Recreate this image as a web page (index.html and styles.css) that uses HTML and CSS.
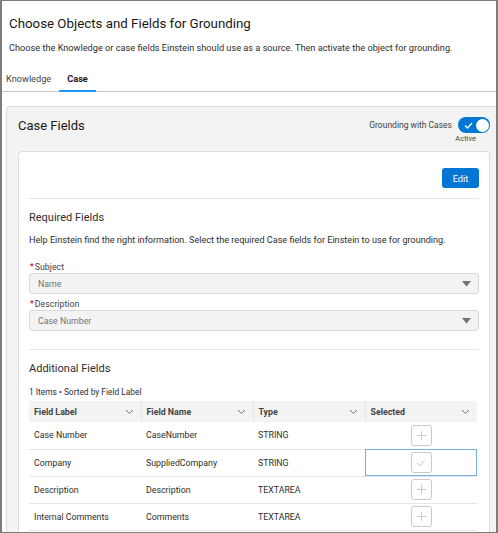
FILE: index.html
```html
<!DOCTYPE html>
<html>
<head>
<meta charset="utf-8">
<link rel="stylesheet" href="styles.css">
</head>
<body>
<div class="frame">
  <header class="page-head">
    <h1 class="title">Choose Objects and Fields for Grounding</h1>
    <p class="subtitle">Choose the Knowledge or case fields Einstein should use as a source. Then activate the object for grounding.</p>
  </header>
  <nav class="tabs">
    <span class="tab">Knowledge</span>
    <span class="tab active">Case</span>
  </nav>
  <section class="card">
    <div class="card-head">
      <h2 class="card-title">Case Fields</h2>
      <div class="toggle-wrap">
        <div class="toggle-row">
          <span class="toggle-label">Grounding with Cases</span>
          <span class="toggle">
            <svg class="toggle-check" width="9" height="7" viewBox="0 0 9 7"><path d="M1 3.5 L3.5 6 L8 1" fill="none" stroke="#fff" stroke-width="1.4"/></svg>
            <span class="knob"></span>
          </span>
        </div>
        <span class="toggle-state">Active</span>
      </div>
    </div>
    <div class="inner">
      <div class="actions"><button class="btn-brand">Edit</button></div>
      <hr class="divider">
      <h3 class="section-title">Required Fields</h3>
      <p class="help">Help Einstein find the right information. Select the required Case fields for Einstein to use for grounding.</p>
      <div class="field">
        <label class="field-label"><abbr class="req">*</abbr>Subject</label>
        <div class="select"><span>Name</span><svg width="9" height="6" viewBox="0 0 9 6"><path d="M0 0 H9 L4.5 5.5 Z" fill="#747474"/></svg></div>
      </div>
      <div class="field">
        <label class="field-label"><abbr class="req">*</abbr>Description</label>
        <div class="select"><span>Case Number</span><svg width="9" height="6" viewBox="0 0 9 6"><path d="M0 0 H9 L4.5 5.5 Z" fill="#747474"/></svg></div>
      </div>
      <hr class="divider divider-2">
      <h3 class="section-title">Additional Fields</h3>
      <p class="meta">1 Items • Sorted by Field Label</p>
      <table class="grid">
        <thead>
          <tr>
            <th><div class="th"><span>Field Label</span><svg width="9" height="6" viewBox="0 0 9 6"><path d="M1 1 L4.5 4.5 L8 1" fill="none" stroke="#747474" stroke-width="1"/></svg></div></th>
            <th><div class="th"><span>Field Name</span><svg width="9" height="6" viewBox="0 0 9 6"><path d="M1 1 L4.5 4.5 L8 1" fill="none" stroke="#747474" stroke-width="1"/></svg></div></th>
            <th><div class="th"><span>Type</span><svg width="9" height="6" viewBox="0 0 9 6"><path d="M1 1 L4.5 4.5 L8 1" fill="none" stroke="#747474" stroke-width="1"/></svg></div></th>
            <th><div class="th"><span>Selected</span><svg width="9" height="6" viewBox="0 0 9 6"><path d="M1 1 L4.5 4.5 L8 1" fill="none" stroke="#747474" stroke-width="1"/></svg></div></th>
          </tr>
        </thead>
        <tbody>
          <tr>
            <td>Case Number</td><td>CaseNumber</td><td>STRING</td>
            <td class="sel"><span class="icon-btn"><svg width="9" height="9" viewBox="0 0 9 9"><path d="M4.5 0 V9 M0 4.5 H9" stroke="#c9c9c9" stroke-width="1"/></svg></span></td>
          </tr>
          <tr>
            <td>Company</td><td>SuppliedCompany</td><td>STRING</td>
            <td class="sel focus"><span class="icon-btn"><svg width="10" height="8" viewBox="0 0 10 8"><path d="M1 4 L3.8 6.6 L9 1.2" fill="none" stroke="#c9c9c9" stroke-width="1"/></svg></span></td>
          </tr>
          <tr>
            <td>Description</td><td>Description</td><td>TEXTAREA</td>
            <td class="sel"><span class="icon-btn"><svg width="9" height="9" viewBox="0 0 9 9"><path d="M4.5 0 V9 M0 4.5 H9" stroke="#c9c9c9" stroke-width="1"/></svg></span></td>
          </tr>
          <tr>
            <td>Internal Comments</td><td>Comments</td><td>TEXTAREA</td>
            <td class="sel"><span class="icon-btn"><svg width="9" height="9" viewBox="0 0 9 9"><path d="M4.5 0 V9 M0 4.5 H9" stroke="#c9c9c9" stroke-width="1"/></svg></span></td>
          </tr>
        </tbody>
      </table>
    </div>
  </section>
</div>
</body>
</html>
```

FILE: styles.css
```css
* { box-sizing: border-box; }
html, body { margin: 0; padding: 0; background: #fff; }
body {
  font-family: Roboto, "Noto Sans", sans-serif;
  color: #181818;
}
.frame {
  width: 498px;
  height: 533px;
  overflow: hidden;
  border: 1px solid #7d7d7d;
  border-left-width: 2px;
  border-right-width: 2px;
  background: #fff;
}
.page-head { padding: 14px 0 0 7px; }
.title {
  margin: 0;
  font-size: 13.3px;
  line-height: 17px;
  font-weight: 400;
  color: #181818;
}
.subtitle {
  margin: 9px 0 0;
  font-size: 9.2px;
  line-height: 13px;
  white-space: nowrap;
  color: #2e2e2e;
}
.tabs {
  display: flex;
  margin-top: 12px;
  padding-left: 4px;
  border-bottom: 1px solid #c9c9c9;
  height: 26px;
}
.tab {
  font-size: 9.2px;
  line-height: 13px;
  color: #444;
  padding: 6px 8px 0 0;
}
.tab.active {
  font-weight: 700;
  color: #181818;
  padding: 6px 8px 0 8px;
  border-bottom: 2px solid #1b96ff;
  margin-bottom: -1px;
}
.card {
  margin: 14px 0 0 4px;
  background: #f3f3f3;
  border: 1px solid #dcdcdc;
  border-right: none;
  border-radius: 4px 0 0 0;
  padding: 0 6px 0 11px;
  height: 440px;
}
.card-head {
  display: flex;
  justify-content: space-between;
  align-items: flex-start;
  height: 44px;
  padding-top: 10px;
}
.card-title {
  margin: 0;
  font-size: 13px;
  line-height: 18px;
  font-weight: 400;
  color: #181818;
}
.toggle-wrap {
  display: flex;
  flex-direction: column;
  align-items: flex-end;
}
.toggle-row { display: flex; align-items: center; gap: 6px; }
.toggle-label { font-size: 8.5px; color: #444; }
.toggle {
  position: relative;
  width: 32px;
  height: 16px;
  border-radius: 8px;
  background: #0176d3;
  display: inline-flex;
  align-items: center;
}
.toggle-check { margin-left: 6px; }
.knob {
  position: absolute;
  right: 1.5px;
  top: 1.5px;
  width: 13px;
  height: 13px;
  border-radius: 50%;
  background: #fff;
}
.toggle-state {
  font-size: 7.5px;
  color: #444;
  margin-top: 1px;
  margin-right: 14px;
}
.inner {
  background: #fff;
  border: 1px solid #dcdcdc;
  border-radius: 4px;
  padding: 16px 10px 0 10px;
  height: 400px;
}
.actions { display: flex; justify-content: flex-end; }
.btn-brand {
  font-family: inherit;
  width: 37px;
  height: 20px;
  border: none;
  border-radius: 3px;
  background: #0176d3;
  color: #fff;
  font-size: 9.2px;
  padding: 0;
}
.divider {
  border: none;
  border-top: 1px solid #e5e5e5;
  margin: 10px 0 0;
}
.divider-2 { margin-top: 18px; }
.section-title {
  margin: 11px 0 0;
  font-size: 11px;
  line-height: 15px;
  font-weight: 400;
  color: #2e2e2e;
}
.help {
  margin: 9px 0 0;
  font-size: 9.1px;
  line-height: 12px;
  white-space: nowrap;
  color: #2e2e2e;
}
.field { margin-top: 15px; }
.field + .field { margin-top: 4px; }
.field-label {
  display: block;
  font-size: 8.8px;
  line-height: 12px;
  color: #444;
  margin-bottom: 0;
}
.req { color: #ba0517; text-decoration: none; margin-right: 1px; margin-left: 1px; }
.select {
  height: 21px;
  background: #f3f3f3;
  border: 1px solid #d8d8d8;
  border-radius: 3px;
  display: flex;
  justify-content: space-between;
  align-items: center;
  padding: 0 7px 0 8px;
  font-size: 8.8px;
  color: #747474;
}
.meta {
  margin: 11px 0 0;
  font-size: 8.4px;
  line-height: 11px;
  color: #2e2e2e;
}
.grid {
  margin-top: 3px;
  width: 448px;
  border-collapse: collapse;
  table-layout: fixed;
  font-size: 8.8px;
  color: #2e2e2e;
}
.grid th {
  background: #f3f3f3;
  height: 21px;
  padding: 0;
  border-left: 1px solid #e5e5e5;
  text-align: left;
  font-weight: 700;
  color: #444;
}
.grid th:first-child { border-left: none; }
.th {
  display: flex;
  justify-content: space-between;
  align-items: center;
  padding: 0 7px 0 5px;
}
.grid td {
  height: 27px;
  padding: 0 5px;
  border-bottom: 1px solid #e5e5e5;
  white-space: nowrap;
}
.grid td.sel { text-align: center; padding: 0; }
.grid td.focus { outline: 1px solid #7aaee8; outline-offset: -1px; }
.icon-btn {
  display: inline-flex;
  width: 21px;
  height: 21px;
  border: 1px solid #c9c9c9;
  border-radius: 3px;
  background: #fff;
  align-items: center;
  justify-content: center;
  vertical-align: middle;
}
```
